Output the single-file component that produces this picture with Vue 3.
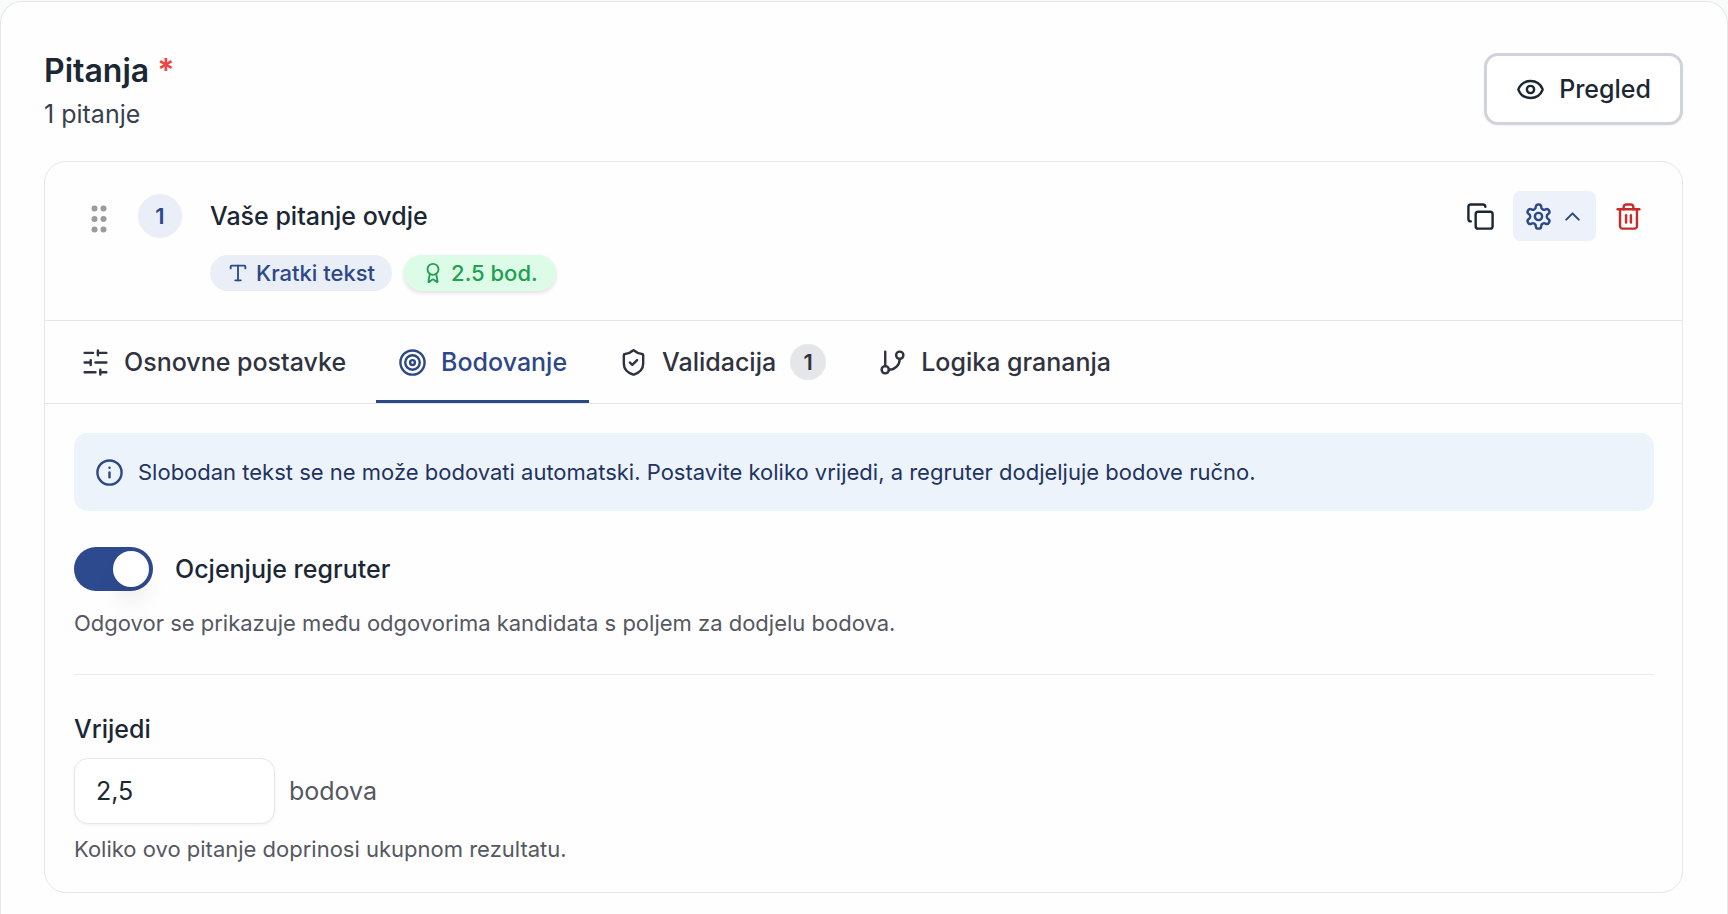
<script setup>
import { h, ref } from "vue";

const icons = {
  eye: [
    "M2.062 12.348a1 1 0 0 1 0-.696 10.75 10.75 0 0 1 19.876 0 1 1 0 0 1 0 .696 10.75 10.75 0 0 1-19.876 0",
    "M15 12a3 3 0 1 1-6 0 3 3 0 0 1 6 0",
  ],
  grip: [
    "M10 5a1 1 0 1 1-2 0 1 1 0 0 1 2 0M10 12a1 1 0 1 1-2 0 1 1 0 0 1 2 0M10 19a1 1 0 1 1-2 0 1 1 0 0 1 2 0",
    "M16 5a1 1 0 1 1-2 0 1 1 0 0 1 2 0M16 12a1 1 0 1 1-2 0 1 1 0 0 1 2 0M16 19a1 1 0 1 1-2 0 1 1 0 0 1 2 0",
  ],
  type: ["M12 4v16", "M4 7V5a1 1 0 0 1 1-1h14a1 1 0 0 1 1 1v2", "M9 20h6"],
  award: [
    "m15.477 12.89 1.515 8.526a.5.5 0 0 1-.81.47l-3.58-2.687a1 1 0 0 0-1.197 0l-3.586 2.686a.5.5 0 0 1-.81-.469l1.514-8.526",
    "M18 8a6 6 0 1 1-12 0 6 6 0 0 1 12 0",
  ],
  copy: [
    "M10 8h10a2 2 0 0 1 2 2v10a2 2 0 0 1-2 2H10a2 2 0 0 1-2-2V10a2 2 0 0 1 2-2",
    "M4 16c-1.1 0-2-.9-2-2V4c0-1.1.9-2 2-2h10c1.1 0 2 .9 2 2",
  ],
  settings: [
    "M12.22 2h-.44a2 2 0 0 0-2 2v.18a2 2 0 0 1-1 1.73l-.43.25a2 2 0 0 1-2 0l-.15-.08a2 2 0 0 0-2.73.73l-.22.38a2 2 0 0 0 .73 2.73l.15.1a2 2 0 0 1 1 1.72v.51a2 2 0 0 1-1 1.74l-.15.09a2 2 0 0 0-.73 2.73l.22.38a2 2 0 0 0 2.73.73l.15-.08a2 2 0 0 1 2 0l.43.25a2 2 0 0 1 1 1.73V20a2 2 0 0 0 2 2h.44a2 2 0 0 0 2-2v-.18a2 2 0 0 1 1-1.73l.43-.25a2 2 0 0 1 2 0l.15.08a2 2 0 0 0 2.73-.73l.22-.39a2 2 0 0 0-.73-2.73l-.15-.08a2 2 0 0 1-1-1.74v-.5a2 2 0 0 1 1-1.74l.15-.09a2 2 0 0 0 .73-2.73l-.22-.38a2 2 0 0 0-2.73-.73l-.15.08a2 2 0 0 1-2 0l-.43-.25a2 2 0 0 1-1-1.73V4a2 2 0 0 0-2-2z",
    "M15 12a3 3 0 1 1-6 0 3 3 0 0 1 6 0",
  ],
  chevron: ["m18 15-6-6-6 6"],
  trash: [
    "M3 6h18",
    "M19 6v14c0 1-1 2-2 2H7c-1 0-2-1-2-2V6",
    "M8 6V4c0-1 1-2 2-2h4c1 0 2 1 2 2v2",
    "M10 11v6",
    "M14 11v6",
  ],
  sliders: [
    "M21 4h-7M10 4H3",
    "M21 12h-9M8 12H3",
    "M21 20h-5M12 20H3",
    "M14 2v4M8 10v4M16 18v4",
  ],
  target: [
    "M22 12a10 10 0 1 1-20 0 10 10 0 0 1 20 0",
    "M18 12a6 6 0 1 1-12 0 6 6 0 0 1 12 0",
    "M14 12a2 2 0 1 1-4 0 2 2 0 0 1 4 0",
  ],
  shield: [
    "M20 13c0 5-3.5 7.5-7.66 8.95a1 1 0 0 1-.67-.01C7.5 20.5 4 18 4 13V6a1 1 0 0 1 1-1c2 0 4.5-1.2 6.24-2.72a1.17 1.17 0 0 1 1.52 0C14.51 3.81 17 5 19 5a1 1 0 0 1 1 1z",
    "m9 12 2 2 4-4",
  ],
  branch: [
    "M6 3v12",
    "M21 6a3 3 0 1 1-6 0 3 3 0 0 1 6 0",
    "M9 18a3 3 0 1 1-6 0 3 3 0 0 1 6 0",
    "M18 9a9 9 0 0 1-9 9",
  ],
  info: ["M22 12a10 10 0 1 1-20 0 10 10 0 0 1 20 0", "M12 16v-4", "M12 8h.01"],
};

const Icon = (props) =>
  h(
    "svg",
    {
      viewBox: "0 0 24 24",
      fill: props.name === "grip" ? "currentColor" : "none",
      stroke: "currentColor",
      "stroke-width": 2,
      "stroke-linecap": "round",
      "stroke-linejoin": "round",
      "aria-hidden": "true",
    },
    icons[props.name].map((d) => h("path", { d }))
  );
Icon.props = ["name"];

const tabs = [
  { id: "basic", label: "Osnovne postavke", icon: "sliders" },
  { id: "scoring", label: "Bodovanje", icon: "target" },
  { id: "validation", label: "Validacija", icon: "shield", count: 1 },
  { id: "logic", label: "Logika grananja", icon: "branch" },
];

const activeTab = ref("scoring");
const recruiterScores = ref(true);
const points = ref("2,5");
</script>

<template>
  <main class="panel">
    <header class="panel-header">
      <div>
        <h2>Pitanja <span class="required">*</span></h2>
        <p class="count">1 pitanje</p>
      </div>
      <button type="button" class="preview">
        <Icon name="eye" class="icon" />
        Pregled
      </button>
    </header>

    <section class="question">
      <div class="question-header">
        <Icon name="grip" class="grip" />
        <span class="number">1</span>
        <div class="question-info">
          <h3>Vaše pitanje ovdje</h3>
          <div class="badges">
            <span class="badge"><Icon name="type" class="icon-small" />Kratki tekst</span>
            <span class="badge badge-green"><Icon name="award" class="icon-small" />2.5 bod.</span>
          </div>
        </div>
        <div class="actions">
          <button type="button" aria-label="Kopiraj"><Icon name="copy" class="icon" /></button>
          <button type="button" class="settings" aria-label="Postavke">
            <Icon name="settings" class="icon" />
            <Icon name="chevron" class="icon-chevron" />
          </button>
          <button type="button" class="delete" aria-label="Obriši"><Icon name="trash" class="icon" /></button>
        </div>
      </div>

      <div class="tabs" role="tablist">
        <button
          v-for="tab in tabs"
          :key="tab.id"
          type="button"
          role="tab"
          class="tab"
          :class="{ active: activeTab === tab.id }"
          :aria-selected="activeTab === tab.id"
          @click="activeTab = tab.id"
        >
          <Icon :name="tab.icon" class="icon" />
          {{ tab.label }}
          <span v-if="tab.count" class="tab-count">{{ tab.count }}</span>
        </button>
      </div>

      <div class="content">
        <div class="notice">
          <Icon name="info" class="icon" />
          <p>Slobodan tekst se ne može bodovati automatski. Postavite koliko vrijedi, a regruter dodjeljuje bodove ručno.</p>
        </div>

        <div class="switch-row">
          <input id="recruiter" v-model="recruiterScores" type="checkbox" role="switch" class="switch" />
          <label for="recruiter">Ocjenjuje regruter</label>
        </div>
        <p class="hint">Odgovor se prikazuje među odgovorima kandidata s poljem za dodjelu bodova.</p>

        <hr />

        <label for="points" class="points-label">Vrijedi</label>
        <div class="points-row">
          <input id="points" v-model="points" type="text" inputmode="decimal" class="points" />
          <span>bodova</span>
        </div>
        <p class="hint">Koliko ovo pitanje doprinosi ukupnom rezultatu.</p>
      </div>
    </section>
  </main>
</template>

<style>
body {
  background-color: #f9fafa;
}
</style>

<style scoped>
.panel {
  box-sizing: border-box;
  min-height: calc(100vh - 1px);
  margin-top: 1px;
  padding: 51px 44px 20px 43px;
  border: 1px solid #e5e7e9;
  border-bottom: none;
  border-radius: 22px 22px 0 0;
  background-color: #fefefe;
  color: #1b2733;
  font-family: "Inter", sans-serif;
  font-size: 25px;
  line-height: 36px;
}

.panel *,
.panel *::before {
  box-sizing: border-box;
}

h2,
h3,
p {
  margin: 0;
}

button,
input {
  font: inherit;
  color: inherit;
}

button {
  cursor: pointer;
}

.icon {
  width: 29px;
  height: 29px;
  flex: none;
}

.icon-small {
  width: 22px;
  height: 22px;
  flex: none;
}

.icon-chevron {
  width: 25px;
  height: 25px;
}

.panel-header {
  display: flex;
  align-items: flex-start;
  justify-content: space-between;
  margin-bottom: 29px;
}

.panel-header h2 {
  font-size: 32px;
  font-weight: 600;
  line-height: 36px;
}

.required {
  color: #ef4444;
}

.count {
  margin-top: 7px;
  color: #3a3f4d;
}

.preview {
  display: flex;
  align-items: center;
  gap: 14px;
  height: 72px;
  padding: 0 29px;
  border: 3px solid #d1d3da;
  border-radius: 14px;
  background-color: #fff;
  font-weight: 500;
  box-shadow: 0 1px 3px rgba(0, 0, 0, 0.05);
}

.question {
  border: 1px solid #e5e7e9;
  border-radius: 22px;
}

.question-header {
  display: flex;
  align-items: flex-start;
  padding: 29px 28px 29px 36px;
  border-bottom: 1px solid #e5e7e9;
}

.grip {
  width: 36px;
  height: 36px;
  margin-top: 10px;
  color: #9a9a9f;
}

.number {
  display: flex;
  align-items: center;
  justify-content: center;
  width: 44px;
  height: 44px;
  margin: 3px 28px 0 21px;
  border-radius: 50%;
  background-color: #e9eef7;
  color: #2d4887;
  font-size: 22px;
  font-weight: 600;
}

.question-info {
  flex: 1;
  padding-top: 7px;
}

.question-info h3 {
  font-size: 25px;
  font-weight: 500;
}

.badges {
  display: flex;
  gap: 12px;
  margin-top: 21px;
}

.badge {
  display: flex;
  align-items: center;
  gap: 7px;
  height: 36px;
  padding: 0 17px;
  border-radius: 18px;
  background-color: #e9eef7;
  color: #2d4887;
  font-size: 22px;
  font-weight: 500;
}

.badge-green {
  padding: 0 18px;
  background-color: #dcfce7;
  color: #22a052;
  box-shadow: 0 2px 4px rgba(0, 0, 0, 0.12);
}

.actions {
  display: flex;
  gap: 7px;
}

.actions button {
  display: flex;
  align-items: center;
  gap: 7px;
  height: 50px;
  padding: 0 11px;
  border: none;
  border-radius: 7px;
  background-color: transparent;
}

.actions .settings {
  background-color: #edf2fa;
  color: #2d4887;
}

.actions .delete {
  color: #c92a2a;
}

.tabs {
  display: flex;
  gap: 8px;
  padding: 0 14px;
  border-bottom: 1px solid #e5e7e9;
}

.tab {
  display: flex;
  align-items: center;
  gap: 14px;
  height: 82px;
  padding: 0 22px;
  border: none;
  border-top: 3px solid transparent;
  border-bottom: 3px solid transparent;
  background-color: transparent;
  color: #2f3340;
  font-weight: 500;
}

.tab.active {
  border-bottom-color: #2d4887;
  color: #2d4887;
}

.tab-count {
  width: 36px;
  height: 36px;
  border-radius: 50%;
  background-color: #e5e6ea;
  font-size: 22px;
  font-weight: 600;
  text-align: center;
}

.content {
  padding: 29px 28px 25px 29px;
}

.notice {
  display: flex;
  align-items: center;
  gap: 14px;
  padding: 21px;
  border-radius: 14px;
  background-color: #edf3fb;
  color: #22335f;
  font-size: 22px;
}

.notice .icon {
  color: #2d4887;
}

.switch-row {
  display: flex;
  align-items: center;
  gap: 22px;
  margin: 36px 0 14px;
  font-weight: 500;
}

.switch {
  display: flex;
  appearance: none;
  width: 79px;
  height: 44px;
  margin: 0;
  padding: 4px;
  border-radius: 22px;
  background-color: #c9ccd3;
  cursor: pointer;
}

.switch::before {
  content: "";
  width: 36px;
  height: 36px;
  border-radius: 50%;
  background-color: #fff;
  box-shadow: 0 16px 20px rgba(0, 0, 0, 0.06);
}

.switch:checked {
  justify-content: flex-end;
  background-color: #2e4a8f;
}

.hint {
  color: #555861;
  font-size: 22px;
}

hr {
  margin: 33px 0 36px;
  border: none;
  border-top: 1px solid #e9eaec;
}

.points-label {
  display: block;
  font-weight: 500;
}

.points-row {
  display: flex;
  align-items: center;
  gap: 14px;
  margin: 11px 0 7px;
  color: #555861;
}

.points {
  width: 201px;
  height: 66px;
  padding: 0 21px;
  border: 1px solid #e5e7e9;
  border-radius: 14px;
  background-color: #fff;
  color: #1b2733;
  box-shadow: 0 1px 3px rgba(0, 0, 0, 0.06);
}
</style>
